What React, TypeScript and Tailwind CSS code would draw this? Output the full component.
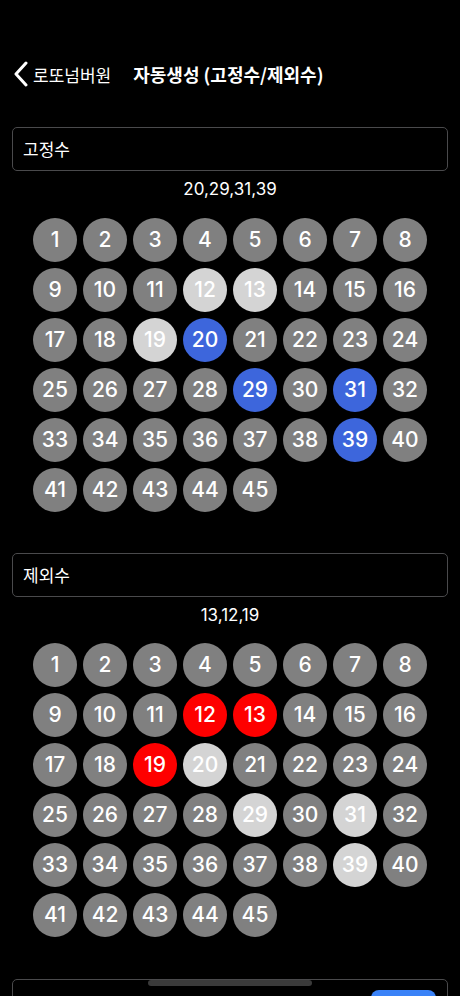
import React from "react";

const font = { fontFamily: '"Noto Sans CJK KR", "Noto Sans", sans-serif' };
const numFont = { fontFamily: 'Inter, "Noto Sans", sans-serif' };

type Kind = "g" | "l" | "b" | "r";

function Ball({ n, kind }: { n: number; kind: Kind }) {
  const cls =
    kind === "b"
      ? "bg-[#3d66dc]"
      : kind === "r"
      ? "bg-[#fe0000]"
      : kind === "l"
      ? "bg-[#d4d4d4]"
      : "bg-[#808080]";
  return (
    <div
      className={`w-[44px] h-[44px] rounded-full flex items-center justify-center text-white text-[21px] font-medium ${cls}`}
      style={numFont}
    >
      {n}
    </div>
  );
}

function Grid({ kinds }: { kinds: Record<number, Kind> }) {
  const nums = Array.from({ length: 45 }, (_, i) => i + 1);
  return (
    <div className="grid grid-cols-[repeat(8,44px)] gap-[6px] justify-center">
      {nums.map((n) => (
        <Ball key={n} n={n} kind={kinds[n] || "g"} />
      ))}
    </div>
  );
}

export default function App() {
  const fixedKinds: Record<number, Kind> = {
    12: "l",
    13: "l",
    19: "l",
    20: "b",
    29: "b",
    31: "b",
    39: "b",
  };
  const exclKinds: Record<number, Kind> = {
    12: "r",
    13: "r",
    19: "r",
    20: "l",
    29: "l",
    31: "l",
    39: "l",
  };
  return (
    <div className="w-[460px] h-[996px] bg-black text-white overflow-hidden relative" style={font}>
      <div className="h-[44px] mt-[52px] flex items-center">
        <div className="flex items-center pl-[13px]">
          <svg width="17" height="26" viewBox="0 0 17 26" fill="none">
            <path d="M13 2 L3 13 L13 24" stroke="white" strokeWidth="3" strokeLinecap="round" strokeLinejoin="round" />
          </svg>
          <span className="text-[17px] ml-[3px] leading-none">로또넘버원</span>
        </div>
        <span className="text-[18px] font-bold ml-[22px] leading-none">자동생성 (고정수/제외수)</span>
      </div>

      <div className="mx-[12px] mt-[31px] h-[44px] border border-[#4a4a4c] rounded-[5px] flex items-center px-[10px]">
        <span className="text-[17px]">고정수</span>
      </div>
      <div className="h-[38px] flex items-center justify-center text-[17px]" style={numFont}>
        20,29,31,39
      </div>
      <div className="mt-[9px]">
        <Grid kinds={fixedKinds} />
      </div>

      <div className="mx-[12px] mt-[41px] h-[44px] border border-[#4a4a4c] rounded-[5px] flex items-center px-[10px]">
        <span className="text-[17px]">제외수</span>
      </div>
      <div className="h-[38px] flex items-center justify-center text-[17px]" style={numFont}>
        13,12,19
      </div>
      <div className="mt-[8px]">
        <Grid kinds={exclKinds} />
      </div>

      <div className="mx-[12px] mt-[42px] h-[60px] border border-[#4a4a4c] rounded-[5px] flex justify-end pr-[11px] pt-[10px]">
        <div className="w-[65px] h-[40px] rounded-[8px] bg-[#3a82f7]" />
      </div>

      <div className="absolute left-[148px] top-[980px] w-[164px] h-[6px] rounded-full bg-[#3a3a3a]" />
    </div>
  );
}
